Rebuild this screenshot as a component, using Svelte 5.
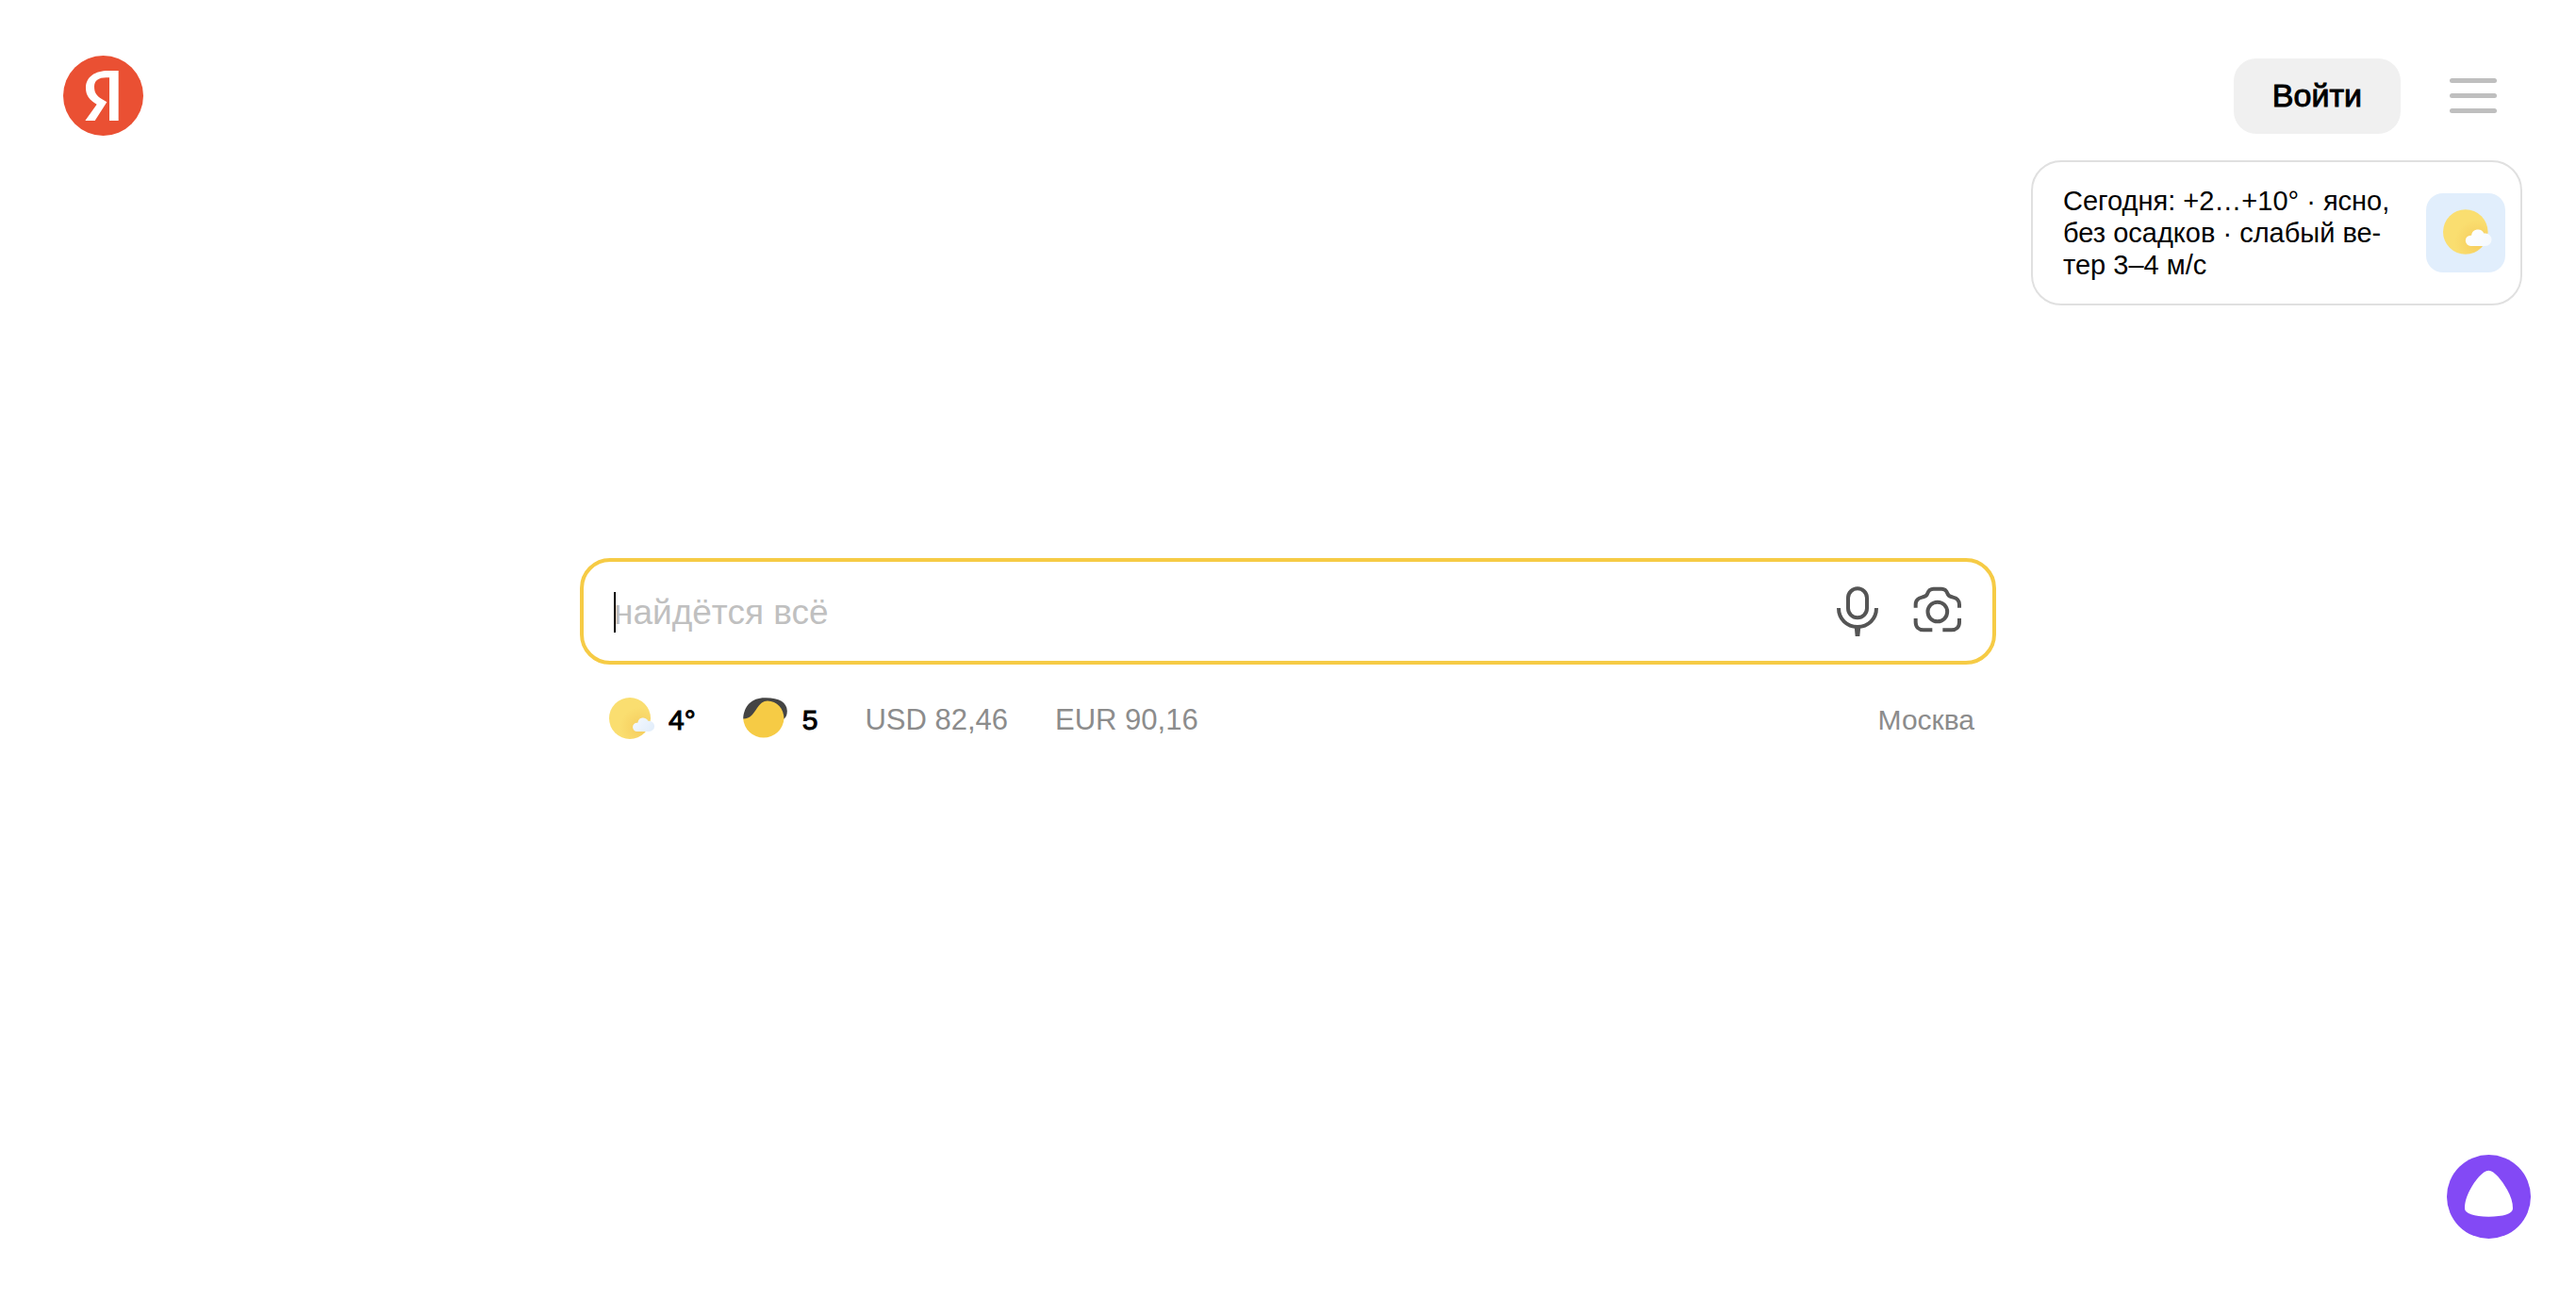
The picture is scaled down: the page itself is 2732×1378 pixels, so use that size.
<script>
  let query = $state('');
  const rates = [
    { code: 'USD', value: '82,46' },
    { code: 'EUR', value: '90,16' }
  ];
</script>

{#snippet partlySunny(id)}
  <svg class="weather" viewBox="0 0 49 44" aria-hidden="true">
    <defs>
      <radialGradient id="{id}-sun" cx="0.76" cy="0.72" r="0.62">
        <stop offset="0" stop-color="#f5cb5c" />
        <stop offset="0.3" stop-color="#f7d364" />
        <stop offset="0.8" stop-color="#fade70" />
      </radialGradient>
      <linearGradient id="{id}-cloud" x1="0" y1="0" x2="1" y2="0.5">
        <stop offset="0" stop-color={id === 'card' ? '#ffffff' : '#f5f9fe'} />
        <stop offset="1" stop-color={id === 'card' ? '#f6fafe' : '#e3eefb'} />
      </linearGradient>
    </defs>
    <circle cx="22" cy="22" r="22" fill="url(#{id}-sun)" />
    <path
      transform={id === 'card' ? 'translate(-5.8 -4.2) scale(1.11)' : undefined}
      d="M29.7 36a4.65 4.65 0 0 1 0-9.3h.6a5.8 5.8 0 0 1 11-1.9h1.200a5.600 5.600 0 0 1 0 11.200Z"
      fill="url(#{id}-cloud)"
    />
  </svg>
{/snippet}

<div class="page">
  <header class="header">
    <a class="logo" href="/" aria-label="Яндекс">
      <svg viewBox="0 0 255 255" aria-hidden="true">
        <circle cx="127.5" cy="127.500" r="127.500" fill="#ea5033" />
        <path
          d="M176 48H143C102 48 72 67 72 103C72 128 85 143 107 155L70 207H101L139 148L124 139C107 128 99 119 99 99C99 80 112 70 137 70H147V207H176Z"
          fill="#fff"
        />
      </svg>
    </a>
    <div class="actions">
      <button class="login" type="button">Войти</button>
      <button class="menu" type="button" aria-label="Меню">
        <span></span><span></span><span></span>
      </button>
    </div>
  </header>

  <a class="forecast" href="/pogoda">
    <span class="forecast-text">Сегодня: +2…+10° · ясно,<br />без осадков · слабый ве-<br />тер 3–4 м/с</span>
    <span class="tile">{@render partlySunny('card')}</span>
  </a>

  <main class="main">
    <form class="search" role="search">
      <div class="field">
        <input type="text" bind:value={query} placeholder="найдётся всё" aria-label="Запрос" />
        <span class="caret" aria-hidden="true"></span>
      </div>
      <button class="tool" type="button" aria-label="Голосовой поиск">
        <svg width="44" height="54" viewBox="144 125 132 162" fill="none" stroke="#555" stroke-width="12" aria-hidden="true">
          <rect x="180" y="132" width="60" height="93" rx="30" />
          <path d="M150 194C150 229 176 254 210 254S270 229 270 194" />
          <path d="M200 252H220L217 284H203Z" fill="#555" stroke="none" />
        </svg>
      </button>
      <button class="tool" type="button" aria-label="Поиск по картинке">
        <svg width="52" height="54" viewBox="386 125 156 162" fill="none" stroke="#555" stroke-width="12" aria-hidden="true">
          <circle cx="463.500" cy="206" r="31" />
          <path
            d="M394 193V183C394 171 402 163 414 160L420 158C427 156 430 153 432 147C435 138 441 133 451 133H476C486 133 492 138 495 147C497 153 500 156 507 158L513 160C525 163 533 171 533 183V193M394 227V239C394 255 404 264 419 264H447M480 264H508C523 264 533 255 533 239V227"
          />
        </svg>
      </button>
    </form>

    <nav class="informers">
      <a class="informer strong" href="/pogoda">
        {@render partlySunny('row')}
        <span class="label">4°</span>
      </a>
      <a class="informer strong" href="/maps">
        <svg class="weather" viewBox="0 0 49 44" aria-hidden="true">
          <path d="M.2 22.500C1 9 9 .3 23 .3C38 0 46.500 5 46.800 14C46.900 18 45.500 21 43.500 22.500L22 34Z" fill="#444" />
          <path d="M.2 22.500C8 22.500 11 17 15 11C18 6.500 21.500 3.500 26 3.500C36 3.500 43.500 12 43.500 22.500A21.700 21.500 0 0 1 .2 22.500Z" fill="#f6cb45" />
        </svg>
        <span class="label">5</span>
      </a>
      {#each rates as rate}
        <a class="informer label rate" href="/rates">{rate.code} {rate.value}</a>
      {/each}
      <a class="label city" href="/region">Москва</a>
    </nav>
  </main>

  <button class="assistant" type="button" aria-label="Алиса">
    <svg viewBox="0 0 267 267" aria-hidden="true">
      <circle cx="133.500" cy="133.500" r="133.500" fill="#8349f5" />
      <path
        d="M133 50C115 50 89 82 74 111C62 134 57 152 57 171C57 187 87 197 133 197C179 197 210 188 210 171C210 151 204 133 192 111C176 82 151 50 133 50Z"
        fill="#fff"
      />
    </svg>
  </button>
</div>

<style>
  :global(body) {
    margin: 0;
    background: #fff;
  }

  .page {
    box-sizing: border-box;
    min-height: 100vh;
    display: flex;
    flex-direction: column;
    font-family: 'Liberation Sans', Arial, Helvetica, sans-serif;
    color: #000;
  }

  a {
    color: inherit;
    text-decoration: none;
  }

  button {
    margin: 0;
    padding: 0;
    border: 0;
    background: none;
    font: inherit;
    color: inherit;
    cursor: pointer;
  }

  svg {
    display: block;
  }

  .header {
    display: flex;
    justify-content: space-between;
    align-items: center;
    padding: 59px 84px 0 67px;
  }

  .logo {
    width: 85px;
    height: 85px;
  }

  .actions {
    display: flex;
    align-items: center;
    gap: 52px;
  }

  .login {
    height: 80px;
    padding: 0 41px;
    border-radius: 24px;
    background: #f0f0f0;
    font-size: 34px;
    -webkit-text-stroke: 1px #000;
  }

  .menu {
    width: 50px;
    display: flex;
    flex-direction: column;
    gap: 11px;
  }

  .menu span {
    height: 5px;
    border-radius: 3px;
    background: #bfbfbf;
  }

  .forecast {
    box-sizing: border-box;
    align-self: flex-end;
    display: flex;
    align-items: center;
    justify-content: space-between;
    width: 521px;
    margin: 26px 57px 0 0;
    padding: 24px 16px 24px 32px;
    border: 2px solid #e0e0e0;
    border-radius: 32px;
    font-size: 29px;
    line-height: 34px;
  }

  .forecast-text {
    white-space: nowrap;
  }

  .tile {
    box-sizing: border-box;
    width: 84px;
    height: 84px;
    padding: 17px 0 0 18px;
    border-radius: 18px;
    background: #e1eefc;
  }

  .weather {
    width: 49px;
    height: 44px;
  }

  .tile .weather {
    width: 53px;
    height: 48px;
    overflow: visible;
  }

  .main {
    box-sizing: border-box;
    width: 100%;
    max-width: 1502px;
    margin: 268px auto 0;
  }

  .search {
    display: flex;
    align-items: center;
    gap: 37px;
    box-sizing: border-box;
    height: 113px;
    padding: 0 32px;
    border: 4px solid #f6cb45;
    border-radius: 32px;
  }

  .field {
    position: relative;
    flex: 1;
    display: flex;
    align-items: center;
  }

  .field input {
    width: 100%;
    height: 56px;
    padding: 2px 0 0;
    border: 0;
    outline: 0;
    background: none;
    font: inherit;
    font-size: 37px;
    caret-color: transparent;
  }

  .field input::placeholder {
    color: #c0c0c0;
    opacity: 1;
  }

  .caret {
    position: absolute;
    left: 0;
    top: 8px;
    width: 2px;
    height: 43px;
    background: #000;
  }

  .informers {
    display: flex;
    align-items: flex-start;
    padding: 35px 23px 0 31px;
    font-size: 31px;
    line-height: 44px;
  }

  .informer {
    display: flex;
    align-items: flex-start;
    gap: 14px;
    margin-right: 50px;
  }

  .label {
    padding-top: 2px;
  }

  .strong {
    font-size: 30px;
    -webkit-text-stroke: 1px #000;
  }

  .rate,
  .city {
    color: #8c8c8c;
  }

  .city {
    margin-left: auto;
    font-size: 30px;
  }

  .assistant {
    position: fixed;
    right: 48px;
    bottom: 64px;
    width: 89px;
    height: 89px;
  }
</style>
